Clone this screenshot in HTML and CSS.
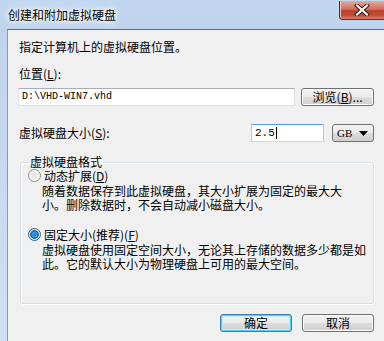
FILE: index.html
```html
<!DOCTYPE html>
<html lang="zh-CN">
<head>
<meta charset="utf-8">
<title>创建和附加虚拟硬盘</title>
<link rel="stylesheet" href="styles.css">
</head>
<body>
<div class="window">
  <div class="titlebar">
    <span class="title">创建和附加虚拟硬盘</span>
    <span class="close"><svg width="18" height="12" viewBox="0 0 18 12"><path d="M4 1.5 L14 10.5 M14 1.5 L4 10.5" stroke="#3a1a14" stroke-width="4.2" stroke-linecap="square"/><path d="M4 1.5 L14 10.5 M14 1.5 L4 10.5" stroke="#ffffff" stroke-width="2.2" stroke-linecap="square"/></svg></span>
  </div>
  <div class="client">
    <div class="intro">指定计算机上的虚拟硬盘位置。</div>
    <div class="label">位置(<u>L</u>):</div>
    <div class="row-path">
      <div class="textbox path">D:\VHD-WIN7.vhd</div>
      <div class="btn browse">浏览(<u>B</u>)...</div>
    </div>
    <div class="row-size">
      <div class="label size-label">虚拟硬盘大小(<u>S</u>):</div>
      <div class="textbox size focus">2.5<span class="caret"></span></div>
      <div class="combo"><span>GB</span><svg width="9" height="5" viewBox="0 0 9 5"><path d="M0 0 H9 L4.5 5 Z" fill="#000"/></svg></div>
    </div>
    <fieldset class="group">
      <legend>虚拟硬盘格式</legend>
      <div class="opt"><span class="radio"></span><span>动态扩展(<u>D</u>)</span></div>
      <div class="desc"><div>随着数据保存到此虚拟硬盘，其大小扩展为固定的最大大</div><div>小。删除数据时，不会自动减小磁盘大小。</div></div>
      <div class="opt opt2"><span class="radio checked"></span><span>固定大小(推荐)(<u>F</u>)</span></div>
      <div class="desc"><div>虚拟硬盘使用固定空间大小，无论其上存储的数据多少都是如</div><div>此。它的默认大小为物理硬盘上可用的最大空间。</div></div>
    </fieldset>
    <div class="buttons">
      <div class="btn ok">确定</div>
      <div class="btn cancel">取消</div>
    </div>
  </div>
</div>
</body>
</html>
```

FILE: styles.css
```css
html, body {
  margin: 0;
  padding: 0;
  width: 384px;
  height: 341px;
  overflow: hidden;
  font-family: "Noto Sans CJK SC", "Liberation Sans", sans-serif;
  font-size: 12px;
  color: #000;
}
u { text-decoration: underline; }

.window {
  width: 384px;
  height: 341px;
  background: linear-gradient(180deg, #c2d8f0 0px, #bfd4ec 29px, #cfe0f3 100%);
  padding-left: 7px;
  box-sizing: border-box;
  display: flex;
  flex-direction: column;
}

.titlebar {
  height: 29px;
  flex: none;
  display: flex;
  justify-content: space-between;
  align-items: flex-start;
  margin-left: -7px;
  padding-left: 8px;
}
.title {
  margin-top: 8px;
  line-height: 14px;
  color: #000;
  text-shadow: 0 0 4px #fff, 0 0 6px #fff, 0 0 8px #eef5fd;
}
.close {
  margin-top: 1px;
  width: 44px;
  height: 18px;
  border: 1px solid #5e2a22;
  border-right: none;
  border-top: none;
  border-radius: 0 0 0 4px;
  background: linear-gradient(180deg, #e9a99b 0%, #d0715f 45%, #b8402c 55%, #c24d36 80%, #d9836f 100%);
  display: flex;
  align-items: center;
  justify-content: center;
  box-shadow: inset 1px 0 #f0c2b6;
}

.client {
  flex: 1;
  background: #f0f0f0;
  border-top: 1px solid #636b78;
  border-left: 1px solid #8a99ad;
  padding: 10px 10px 0 10px;
  display: flex;
  flex-direction: column;
  line-height: 14px;
}

.intro { margin-bottom: 13px; margin-left: 1px; }
.label { margin-left: 1px; }

.row-path {
  display: flex;
  align-items: center;
  margin-top: 7px;
  gap: 6px;
}
.textbox {
  box-sizing: border-box;
  height: 18px;
  background: #fff;
  border: 1px solid #dbdfe6;
  border-top-color: #abadb3;
  border-left-color: #e2e3ea;
  display: flex;
  align-items: center;
  padding-left: 3px;
  font-family: "Liberation Mono", monospace;
  font-size: 10px;
}
.path { width: 278px; }

.btn {
  box-sizing: border-box;
  height: 18px;
  border: 1px solid #707070;
  border-radius: 3px;
  background: linear-gradient(180deg, #f2f2f2 0%, #ebebeb 50%, #dddddd 51%, #cfcfcf 100%);
  box-shadow: inset 0 0 0 1px #fcfcfc;
  display: flex;
  align-items: center;
  justify-content: center;
  line-height: 14px;
}
.browse { width: 73px; }

.row-size {
  display: flex;
  align-items: center;
  margin-top: 18px;
}
.size-label { flex: 1; }
.size {
  width: 73px;
  height: 18px;
  border: 1px solid #3d8ee0;
  border-color: #569de5 #a6cbed #c5dcf3 #a6cbed;
  font-size: 11px;
}
.caret {
  display: inline-block;
  width: 1px;
  height: 12px;
  background: #000;
  margin-left: 1px;
}
.combo {
  box-sizing: border-box;
  width: 42px;
  height: 18px;
  margin-left: 8px;
  border: 1px solid #707070;
  border-radius: 3px;
  background: linear-gradient(180deg, #f2f2f2 0%, #ebebeb 50%, #dddddd 51%, #cfcfcf 100%);
  display: flex;
  align-items: center;
  justify-content: space-between;
  padding: 0 5px 0 4px;
  font-family: "Liberation Serif", serif;
  font-size: 11px;
}

.group {
  margin: 13px 0 0 2px;
  padding: 0 0 0 7px;
  border: 1px solid #d5dfe5;
  border-radius: 3px;
  box-shadow: inset 1px 1px #fff, 1px 1px #fff;
  height: 149px;
  box-sizing: border-box;
  min-width: 0;
}
.group legend {
  padding: 0 2px;
  margin-left: 0;
  line-height: 14px;
}
.opt {
  display: flex;
  align-items: center;
  gap: 3px;
  height: 13px;
  line-height: 13px;
}
.opt2 { margin-top: 17px; }
.radio {
  box-sizing: border-box;
  width: 13px;
  height: 13px;
  border-radius: 50%;
  border: 1px solid #8e8f8f;
  background: radial-gradient(circle at 50% 50%, #e2e2e2 0, #f4f4f4 60%, #ffffff 100%);
  flex: none;
}
.radio.checked {
  border-color: #2c628b;
  background: radial-gradient(circle at 50% 50%, #1f6ec0 0, #3aa0e8 2px, #1d5a96 4px, #dfe9f3 4.6px, #f4f6f8 100%);
}
.desc {
  margin-left: 14px;
  margin-top: 2px;
  white-space: nowrap;
}
.desc div {
  height: 13.5px;
  line-height: 13.5px;
}

.buttons {
  display: flex;
  justify-content: flex-end;
  gap: 10px;
  margin-top: 10px;
}
.ok, .cancel { width: 72px; }
.ok {
  border-color: #3c7fb1;
  box-shadow: inset 0 0 0 1px #4fd0f8, inset 0 0 0 2px #c6edfb;
}
```
